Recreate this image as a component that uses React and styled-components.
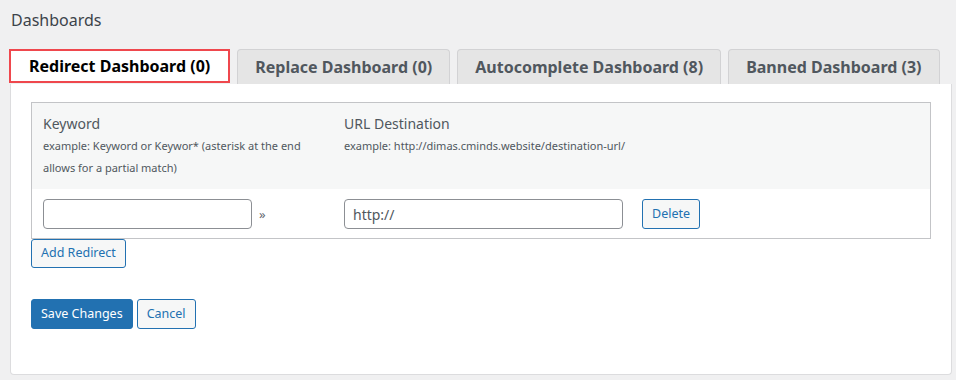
import styled, { createGlobalStyle } from 'styled-components'

const GlobalStyle = createGlobalStyle`
  html, body {
    margin: 0;
    padding: 0;
    background: #f0f0f1;
    font-family: "Noto Sans", "Open Sans", sans-serif;
    color: #3c434a;
  }
`

const Page = styled.div`
  padding: 9px 4px 4px 10px;
`

const Title = styled.h2`
  margin: 0;
  font-size: 16px;
  font-weight: 400;
  line-height: 22px;
  color: #3c434a;
  padding-left: 1px;
`

const TabBar = styled.div`
  display: flex;
  align-items: flex-end;
  gap: 7px;
  margin-top: 18px;
  margin-left: -1px;
  height: 35px;
`

const Tab = styled.div`
  box-sizing: border-box;
  display: flex;
  align-items: center;
  justify-content: center;
  font-size: 16px;
  font-weight: 700;
  white-space: nowrap;
  ${p => p.$active ? `
    height: 34px;
    align-self: flex-start;
    padding: 0 18px;
    background: #fff;
    color: #000;
    border: 2px solid #ef474d;
  ` : `
    height: 35px;
    padding: 0 17px;
    background: #e5e5e5;
    color: #50575e;
    border: 1px solid #d2d2d4;
    border-bottom: none;
    border-radius: 4px 4px 0 0;
  `}
`

const Panel = styled.div`
  background: #fff;
  border: 1px solid #dcdcde;
  border-top: none;
  border-radius: 0 0 4px 4px;
  padding: 18px 20px 45px 20px;
`

const Table = styled.div`
  border: 1px solid #c3c4c7;
  display: grid;
  grid-template-columns: 301px 1fr;
`

const HeadCell = styled.div`
  background: #f6f7f7;
  padding: 10px 11px 10px;
`

const HeadLabel = styled.div`
  font-size: 14px;
  line-height: 22px;
  color: #50575e;
`

const Hint = styled.div`
  font-size: 11px;
  line-height: 22px;
  color: #50575e;
`

const BodyCell = styled.div`
  display: flex;
  align-items: center;
  padding: 10px 11px 9px;
  background: #fff;
`

const Input = styled.input`
  box-sizing: border-box;
  width: ${p => p.$width}px;
  height: 30px;
  border: 1px solid #8c8f94;
  border-radius: 4px;
  padding: 0 8px;
  font-family: inherit;
  font-size: 14px;
  color: #50575e;
  background: #fff;
  outline: none;
`

const Raquo = styled.span`
  margin-left: 7px;
  font-size: 13px;
  color: #646970;
`

const Button = styled.button`
  box-sizing: border-box;
  height: ${p => p.$h || 30}px;
  padding: 0 9px;
  font-family: inherit;
  font-size: 12.5px;
  line-height: 1;
  border-radius: 3px;
  border: 1px solid #2271b1;
  cursor: pointer;
  background: ${p => p.$primary ? '#2271b1' : '#f6f7f7'};
  color: ${p => p.$primary ? '#fff' : '#2271b1'};
  margin-left: ${p => p.$ml || 0}px;
`

const Actions = styled.div`
  display: flex;
  gap: 4px;
  margin-top: 31px;
`

export default function App() {
  return (
    <>
      <GlobalStyle />
      <Page>
        <Title>Dashboards</Title>
        <TabBar>
          <Tab $active>Redirect Dashboard (0)</Tab>
          <Tab>Replace Dashboard (0)</Tab>
          <Tab>Autocomplete Dashboard (8)</Tab>
          <Tab>Banned Dashboard (3)</Tab>
        </TabBar>
        <Panel>
          <Table>
            <HeadCell>
              <HeadLabel>Keyword</HeadLabel>
              <Hint>example: Keyword or Keywor* (asterisk at the end allows for a partial match)</Hint>
            </HeadCell>
            <HeadCell>
              <HeadLabel>URL Destination</HeadLabel>
              <Hint>example: http://dimas.cminds.website/destination-url/</Hint>
            </HeadCell>
            <BodyCell>
              <Input $width={209} />
              <Raquo>»</Raquo>
            </BodyCell>
            <BodyCell>
              <Input $width={279} defaultValue="http://" />
              <Button $ml={19}>Delete</Button>
            </BodyCell>
          </Table>
          <Button $h={29}>Add Redirect</Button>
          <Actions>
            <Button $primary>Save Changes</Button>
            <Button>Cancel</Button>
          </Actions>
        </Panel>
      </Page>
    </>
  )
}
